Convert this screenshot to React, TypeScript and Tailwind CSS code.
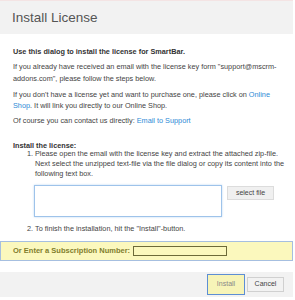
import React from "react";

export default function App() {
  return (
    <div className="w-[295px] h-[300px] bg-white overflow-hidden" style={{ fontFamily: '"Liberation Sans", Arial, sans-serif' }}>
      <div className="w-[293px]">
        <div className="h-[1px] bg-[#f4e4e4]" />
        <div className="h-[33px] bg-[#f2f2f2] flex items-center pl-[12px]">
          <span className="text-[13.5px] text-[#555555] leading-none">Install License</span>
        </div>
        <div className="pl-[13px] pr-[8px] pt-[12px] text-[7.3px] leading-[11px] text-[#444444]">
          <p className="font-bold text-[#333333]">Use this dialog to install the license for SmartBar.</p>
          <p className="mt-[4px] leading-[12px]">If you already have received an email with the license key form "support@mscrm-addons.com", please follow the steps below.</p>
          <p className="mt-[4px]">If you don't have a license yet and want to purchase one, please click on <span className="text-[#2d8bd6]">Online Shop</span>. It will link you directly to our Online Shop.</p>
          <p className="mt-[4px]">Of course you can contact us directly: <span className="text-[#2d8bd6]">Email to Support</span></p>
          <p className="mt-[14px] font-bold text-[#333333]">Install the license:</p>
          <div className="flex mt-[-2px] leading-[10px]">
            <span className="w-[8px] ml-[14px] shrink-0">1.</span>
            <div className="flex-1">
              <p>Please open the email with the license key and extract the attached zip-file. Next select the unzipped text-file via the file dialog or copy its content into the following text box.</p>
              <div className="flex items-start mt-[6px] ml-[-1px] gap-[5px]">
                <div className="w-[188px] h-[32px] border border-[#9ec3ea] shadow-[0_0_2px_#bcd7f2] bg-white" />
                <div className="mt-[1px] w-[47px] h-[14px] bg-[#f0f0f0] border border-[#dcdcdc] flex items-center justify-center text-[7px] text-[#444]">select file</div>
              </div>
            </div>
          </div>
          <div className="flex mt-[7px] leading-[10px]">
            <span className="w-[8px] ml-[14px] shrink-0">2.</span>
            <p>To finish the installation, hit the "Install"-button.</p>
          </div>
        </div>
        <div className="mt-[7px] h-[20px] bg-[#fbf8bd] border border-[#a6bfe0] flex items-center pl-[12px]">
          <span className="text-[7.5px] font-bold text-[#7f7d2c]">Or Enter a Subscription Number:</span>
          <div className="ml-[3px] w-[94px] h-[10px] border border-[#6d6a38] bg-[#fbf8bd]" />
        </div>
        <div className="mt-[11px] h-[25px] bg-[#f2f2f2] flex items-center justify-end pr-[9px] gap-[2px]">
          <div className="w-[38px] h-[21px] border-[1.5px] border-[#5d8ed4] bg-[#f7f4b8] flex items-center justify-center text-[7px] text-[#888]">Install</div>
          <div className="w-[37px] h-[15px] border border-[#d0d0d0] bg-[#f2f2f2] flex items-center justify-center text-[7px] text-[#444]">Cancel</div>
        </div>
      </div>
    </div>
  );
}
